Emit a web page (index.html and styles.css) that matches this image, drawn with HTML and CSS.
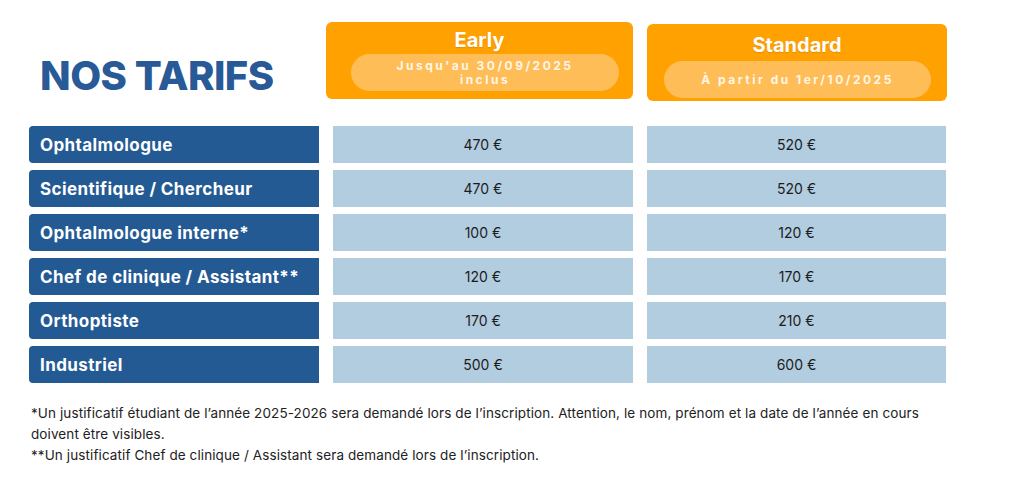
FILE: index.html
```html
<!DOCTYPE html>
<html lang="fr">
<head>
<meta charset="utf-8">
<title>Nos tarifs</title>
<link rel="stylesheet" href="styles.css">
</head>
<body>
<main class="page">
  <header class="head">
    <h1 class="title">NOS TARIFS</h1>
    <div class="card card-early">
      <div class="card-name">Early</div>
      <div class="pill pill-early">Jusqu'au 30/09/2025<br>inclus</div>
    </div>
    <div class="card card-standard">
      <div class="card-name">Standard</div>
      <div class="pill pill-standard">À partir du 1er/10/2025</div>
    </div>
  </header>

  <section class="table">
    <div class="label">Ophtalmologue</div>
    <div class="price">470 €</div>
    <div class="price">520 €</div>

    <div class="label">Scientifique / Chercheur</div>
    <div class="price">470 €</div>
    <div class="price">520 €</div>

    <div class="label">Ophtalmologue interne*</div>
    <div class="price">100 €</div>
    <div class="price">120 €</div>

    <div class="label">Chef de clinique / Assistant**</div>
    <div class="price">120 €</div>
    <div class="price">170 €</div>

    <div class="label">Orthoptiste</div>
    <div class="price">170 €</div>
    <div class="price">210 €</div>

    <div class="label">Industriel</div>
    <div class="price">500 €</div>
    <div class="price">600 €</div>
  </section>

  <footer class="notes">
    <p>*Un justificatif étudiant de l’année 2025-2026 sera demandé lors de l’inscription. Attention, le nom, prénom et la date de l’année en cours doivent être visibles.</p>
    <p>**Un justificatif Chef de clinique / Assistant sera demandé lors de l’inscription.</p>
  </footer>
</main>
</body>
</html>
```

FILE: styles.css
```css
* { box-sizing: border-box; }

html, body {
  margin: 0;
  padding: 0;
  background: #ffffff;
}

body {
  font-family: "Inter", "Liberation Sans", sans-serif;
  color: #1f1f1f;
}

.page {
  padding: 22px 0 0 29px;
  width: 1023px;
}

.head {
  display: flex;
  align-items: flex-start;
  height: 79px;
}

.title {
  width: 297px;
  margin: 0;
  padding: 34px 0 0 11px;
  font-size: 40px;
  line-height: 40px;
  font-weight: 800;
  color: #275a97;
  letter-spacing: -0.5px;
}

.card {
  background: #ffa100;
  border-radius: 6px;
  height: 77px;
  display: flex;
  flex-direction: column;
  color: #ffffff;
}

.card-early {
  width: 307px;
}

.card-standard {
  width: 300px;
  margin-left: 14px;
  margin-top: 2px;
}

.card-name {
  font-size: 20px;
  font-weight: 700;
  line-height: 24px;
  text-align: center;
  padding-top: 6px;
  text-shadow: 0 1px 1px rgba(150, 80, 0, 0.25);
}

.card-standard .card-name {
  padding-top: 9px;
}

.pill {
  background: #ffbd58;
  border-radius: 19px;
  height: 37px;
  font-size: 12px;
  font-weight: 700;
  letter-spacing: 2.5px;
  color: #fff6e6;
  text-align: center;
  display: flex;
  align-items: center;
  justify-content: center;
  line-height: 14px;
}

.pill-early {
  margin: 2px 14px 0 25px;
}

.pill-standard {
  margin: 4px 16px 0 17px;
}

.table {
  margin-top: 25px;
  display: grid;
  grid-template-columns: 290px 300px 299px;
  column-gap: 14px;
  grid-auto-rows: 37px;
  row-gap: 7px;
}

.label {
  background: #245a93;
  color: #ffffff;
  font-size: 17px;
  font-weight: 700;
  letter-spacing: 0.4px;
  display: flex;
  align-items: center;
  padding-left: 11px;
  border-radius: 4px 0 0 4px;
  white-space: nowrap;
}

.price {
  background: #b2cce0;
  font-size: 14px;
  color: #1c1c1c;
  display: flex;
  align-items: center;
  justify-content: center;
}

.notes {
  margin-top: 20px;
  padding-left: 2px;
  width: 920px;
  font-size: 13.5px;
  letter-spacing: 0.1px;
  line-height: 21px;
  color: #222222;
}

.notes p {
  margin: 0;
}
```
